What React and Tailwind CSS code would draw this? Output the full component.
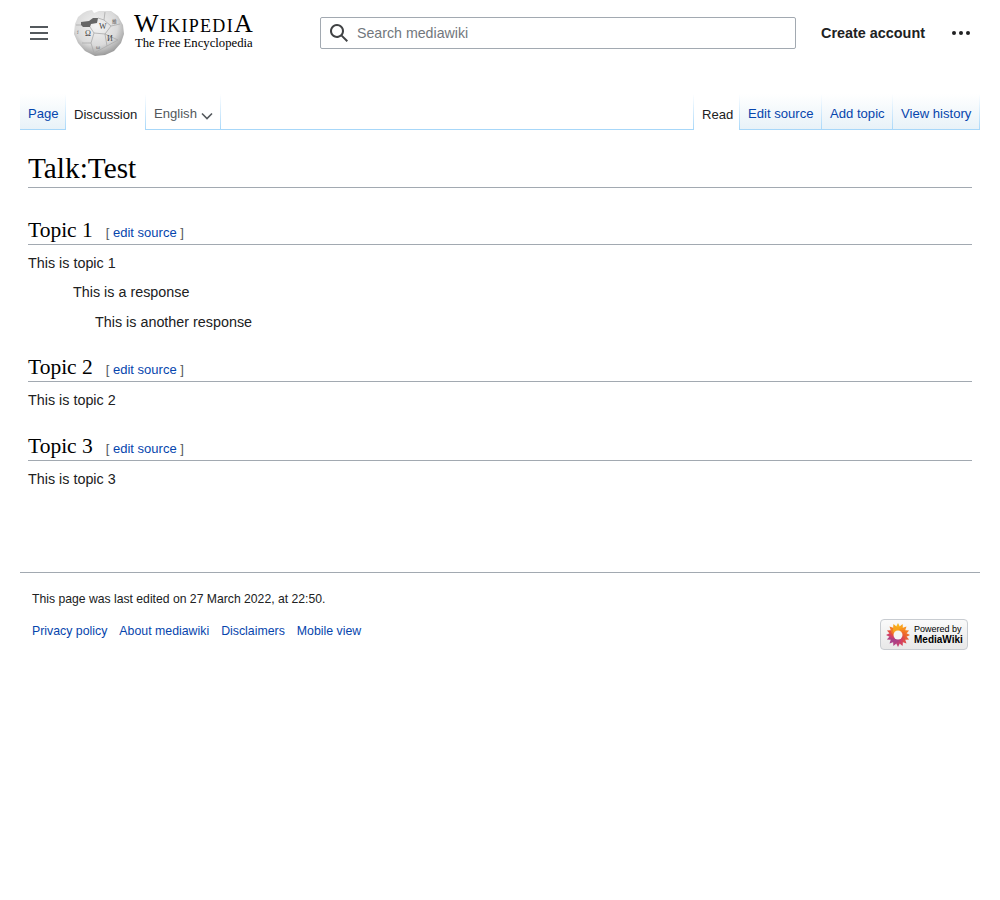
const sans = "font-['Liberation_Sans',Arial,sans-serif]";
const serif = "font-['Liberation_Serif','Times_New_Roman',serif]";

const leftTabs = [
    { name: 'Page', width: 'w-[45px]', tint: true },
    { name: 'Discussion', width: 'w-[79px]', current: true },
];
const rightTabs = [
    { name: 'Read', width: 'w-[45px]', current: true },
    { name: 'Edit source', width: 'w-[81px]', tint: true },
    { name: 'Add topic', width: 'w-[70px]', tint: true },
    { name: 'View history', width: 'w-[86px]', tint: true },
];
const footerLinks = ['Privacy policy', 'About mediawiki', 'Disclaimers', 'Mobile view'];

function MenuIcon() {
    return (
        <svg viewBox="0 0 20 20" className="h-5 w-5 shrink-0" fill="#54595d">
            <path d="M1 3v2h18V3zm0 6v2h18V9zm0 6v2h18v-2z" />
        </svg>
    );
}

function SearchIcon() {
    return (
        <svg viewBox="0 0 20 20" className="h-5 w-5 shrink-0" fill="#404244">
            <path d="M12.2 13.6a7 7 0 111.4-1.4l5.4 5.4-1.4 1.4zM3 8a5 5 0 1010 0A5 5 0 003 8z" />
        </svg>
    );
}

function DotsIcon() {
    return (
        <svg viewBox="0 0 20 20" className="h-5 w-5 shrink-0" fill="#202122">
            <circle cx="3" cy="10" r="2" />
            <circle cx="10" cy="10" r="2" />
            <circle cx="17" cy="10" r="2" />
        </svg>
    );
}

function ChevronIcon() {
    return (
        <svg viewBox="0 0 12 12" className="mb-[2px] ml-[4px] h-3 w-3 shrink-0" fill="none" stroke="#54595d" strokeWidth="1.6">
            <path d="M1 3.5 L6 8.5 L11 3.5" />
        </svg>
    );
}

function Globe() {
    return (
        <svg viewBox="0 0 50 46" className="h-[46px] w-[50px] shrink-0">
            <defs>
                <radialGradient id="globeFill" cx="45%" cy="35%" r="70%">
                    <stop offset="0%" stopColor="#f4f4f4" />
                    <stop offset="60%" stopColor="#dadada" />
                    <stop offset="100%" stopColor="#8a8a8a" />
                </radialGradient>
            </defs>
            <path d="M4 7 L9 3 L13 1 L18 0 L20 3 L25 1 L37 1 L44 6 L49 15 L50 24 L47 33 L40 41 L31 45 L21 46 L11 41 L4 33 L0 24 L1 14 Z" fill="url(#globeFill)" />
            <path d="M7 12 L15 11 L19 8 L24 8 L23 13 L17 14 L16 17 L9 17 L7 15 Z" fill="#666666" />
            <path d="M2 15 L7 15 M16 17 L20 23 L31 24 L37 16 L30 10 L24 8 M20 23 L17 33 L8 33 M17 33 L20 43 M31 24 L33 36 L20 43 M33 36 L44 30 M37 16 L46 14 M31 24 L44 30 M30 10 L31 2" fill="none" stroke="#aaaaaa" strokeWidth="0.8" />
            <text x="11" y="26" fontSize="8" fontFamily="Liberation Serif" fill="#3f3f3f">Ω</text>
            <text x="25" y="19" fontSize="8" fontFamily="Liberation Serif" fill="#3f3f3f">W</text>
            <text x="33" y="31" fontSize="8" fontFamily="Liberation Serif" fill="#3f3f3f">И</text>
            <text x="38" y="13" fontSize="5" fontFamily="Noto Sans CJK SC" fill="#5d5d5d">維</text>
            <text x="22" y="39" fontSize="6" fontFamily="Liberation Serif" fill="#666666">ω</text>
            <text x="3" y="24" fontSize="5" fontFamily="Liberation Serif" fill="#777777">វ</text>
        </svg>
    );
}

function MediaWikiFlower() {
    const colors = ['#f8b41e', '#f9a31d', '#f7901f', '#f37a24', '#ee6a2b', '#e75d34', '#dd4c4a', '#d3425f', '#c23f76', '#b04083', '#a8428a', '#b33f80', '#cf406a', '#e54f3e', '#f07a28', '#f7a51d'];
    return (
        <svg viewBox="0 0 24 24" className="h-6 w-6 shrink-0">
            {colors.map((color, i) => (
                <path key={i} d="M9 6 L12 0 L15 6 L15 9 L9 9 Z" fill={color} transform={`rotate(${i * 22.5} 12 12)`} />
            ))}
            <circle cx="12" cy="12" r="4.5" fill="#f5f5f5" />
        </svg>
    );
}

function Tab({ tab }) {
    return (
        <li className={`${tab.width} flex h-9 items-end whitespace-nowrap pb-[5px] pl-2 ${tab.tint ? 'border-b border-[#a7d7f9] bg-gradient-to-b from-white to-[#e8f2f8] text-[#0645ad]' : 'text-[#202122]'}`}>
            {tab.name}
        </li>
    );
}

function TabEdge() {
    return <li className="h-9 w-px bg-gradient-to-b from-white to-[#a7d7f9]" />;
}

function Heading({ title }) {
    return (
        <div className="flex h-[29px] items-baseline border-b border-[#a2a9b1]">
            <h2 className={`${serif} text-[21.5px] leading-[28px] text-black`}>{title}</h2>
            <span className="ml-[13px] text-[13px] text-[#54595d]">
                [ <span className="text-[#0645ad]">edit source</span> ]
            </span>
        </div>
    );
}

export default function App() {
    return (
        <div className={`${sans} min-h-[900px] bg-white text-[14.35px] text-[#202122]`}>
            {/* Header */}
            <header className="flex h-[66px] items-center pl-[29px]">
                <MenuIcon />
                <div className="ml-[25px] flex items-center">
                    <Globe />
                    <div className="mb-[3px] ml-[10px] flex w-[136px] flex-col">
                        <span className={`${serif} text-[26px] leading-[24px] tracking-[1.3px] text-black [font-variant:small-caps]`}>WikipediA</span>
                        <span className={`${serif} pl-px text-[12.7px] leading-[15px] text-black`}>The Free Encyclopedia</span>
                    </div>
                </div>
                <div className="ml-[50px] flex h-8 w-[476px] shrink-0 items-center rounded-[2px] border border-[#a2a9b1] pl-[8px]">
                    <SearchIcon />
                    <span className="ml-[8px] pt-[2px] text-[14.2px] text-[#72777d]">Search mediawiki</span>
                </div>
                <span className="ml-[25px] whitespace-nowrap pt-[2px] text-[14.4px] font-bold text-[#202122]">Create account</span>
                <div className="ml-[26px]">
                    <DotsIcon />
                </div>
            </header>

            {/* Tabs */}
            <nav className="mx-5 mt-[28px] flex items-end text-[13.1px]">
                <ul className="flex">
                    <Tab tab={leftTabs[0]} />
                    <TabEdge />
                    <Tab tab={leftTabs[1]} />
                    <TabEdge />
                    <li className="flex h-9 w-[74px] items-end border-b border-[#a7d7f9] pb-[5px] pl-2 text-[#54595d]">
                        English
                        <ChevronIcon />
                    </li>
                    <TabEdge />
                </ul>
                <div className="flex-1 border-b border-[#a7d7f9]" />
                <ul className="flex">
                    <TabEdge />
                    <Tab tab={rightTabs[0]} />
                    <TabEdge />
                    <Tab tab={rightTabs[1]} />
                    <TabEdge />
                    <Tab tab={rightTabs[2]} />
                    <TabEdge />
                    <Tab tab={rightTabs[3]} />
                    <TabEdge />
                </ul>
            </nav>

            {/* Content */}
            <main className="mx-7 mt-[18px]">
                <h1 className={`${serif} h-[40px] border-b border-[#a2a9b1] text-[29.3px] leading-[40px] text-black`}>Talk:Test</h1>
                <section className="mt-[28px]">
                    <Heading title="Topic 1" />
                    <p className="mt-[7px] leading-[22px]">This is topic 1</p>
                    <p className="ml-[45px] mt-[7px] leading-[22px]">This is a response</p>
                    <p className="ml-[67px] mt-2 leading-[22px]">This is another response</p>
                </section>
                <section className="mt-[20px]">
                    <Heading title="Topic 2" />
                    <p className="mt-[7px] leading-[22px]">This is topic 2</p>
                </section>
                <section className="mt-[21px]">
                    <Heading title="Topic 3" />
                    <p className="mt-[7px] leading-[22px]">This is topic 3</p>
                </section>
            </main>

            {/* Footer */}
            <footer className="mx-5 mt-[82px] border-t border-[#a2a9b1] px-3 text-[12.2px]">
                <p className="mt-[19px] leading-[14px]">This page was last edited on 27 March 2022, at 22:50.</p>
                <div className="mt-[13px] flex items-start justify-between">
                    <ul className="mt-[3px] flex gap-3 text-[12.33px] text-[#0645ad]">
                        {footerLinks.map((link) => (
                            <li key={link}>{link}</li>
                        ))}
                    </ul>
                    <div className="flex h-[31px] w-[88px] items-center rounded-[4px] border border-[#c8ccd1] bg-gradient-to-b from-[#fafafa] to-[#e8e8e8] pl-[5px]">
                        <MediaWikiFlower />
                        <div className="ml-[4px] flex flex-col text-[9px] leading-[10.5px] text-black">
                            <span>Powered by</span>
                            <span className="text-[10px] font-bold">MediaWiki</span>
                        </div>
                    </div>
                </div>
            </footer>
        </div>
    );
}
